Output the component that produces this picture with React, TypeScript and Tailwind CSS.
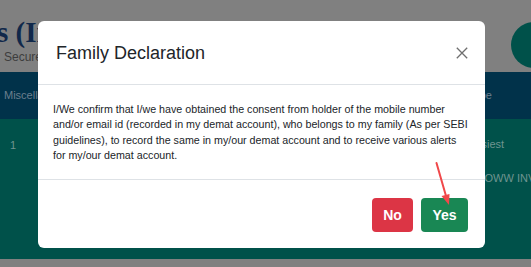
import React from "react";

export default function App() {
  return (
    <div className="relative w-[531px] h-[267px] overflow-hidden bg-[#808080] font-['Liberation_Sans',Arial,sans-serif]">
      {/* Background page (dimmed) */}
      <div className="flex flex-col h-full">
        <div className="h-[72px] flex justify-between items-start">
          <div className="flex flex-col ml-[-3px] pt-[18px] gap-[4px]">
            <span className="font-['Liberation_Serif',serif] font-bold text-[29px] leading-none text-[#10284a] whitespace-nowrap">s (In</span>
            <span className="ml-[7px] text-[12px] leading-none text-[#3d3d3d] whitespace-nowrap">Secured</span>
          </div>
          <div className="mt-[22px] mr-[-26px] w-[46px] h-[46px] rounded-full bg-[#00514a] shrink-0" />
        </div>
        <div className="h-[47px] bg-[#01324a] flex items-center justify-between pl-[4px] pr-[39px] text-[11px] text-[#6b7f8e]">
          <span>Miscellaneous</span>
          <span>Type</span>
        </div>
        <div className="h-[140px] bg-[#00514a] flex justify-between items-start pl-[10px] pt-[17px] text-[11px] text-[#6f9490]">
          <span className="mt-[1px]">1</span>
          <div className="w-[63px] flex flex-col gap-[17px] whitespace-nowrap">
            <span>Easiest</span>
            <span>GROWW INV</span>
          </div>
        </div>
      </div>

      {/* Modal */}
      <div className="absolute left-[38px] top-[21px] w-[447px] h-[227px] bg-white rounded-[6px] flex flex-col">
        <div className="h-[64px] flex items-center justify-between pl-[18px] pr-[17px] border-b border-[#dee2e6]">
          <h5 className="text-[18px] leading-none text-[#212529] mt-[1px]">Family Declaration</h5>
          <svg width="12" height="12" viewBox="0 0 12 12">
            <path d="M0.8 0.8 L11.2 11.2 M11.2 0.8 L0.8 11.2" stroke="#6f6f6f" strokeWidth="1.3" fill="none" />
          </svg>
        </div>
        <div className="h-[95px] px-[15px] pt-[17px] border-b border-[#dee2e6]">
          <p className="text-[10.7px] leading-[15.4px] text-[#212529]">
            I/We confirm that I/we have obtained the consent from holder of the mobile number and/or email id (recorded in my demat account), who belongs to my family (As per SEBI guidelines), to record the same in my/our demat account and to receive various alerts for my/our demat account.
          </p>
        </div>
        <div className="flex-1 flex justify-end items-start pt-[18px] pr-[17px] gap-[8px]">
          <button className="w-[41px] h-[34px] rounded-[4px] bg-[#dc3545] text-white text-[14px] font-bold">No</button>
          <button className="w-[47px] h-[34px] rounded-[4px] bg-[#198754] text-white text-[14px] font-bold">Yes</button>
        </div>
      </div>

      {/* Red annotation arrow */}
      <svg className="absolute left-0 top-0" width="531" height="267" viewBox="0 0 531 267">
        <line x1="436.5" y1="163" x2="446" y2="196" stroke="#f0484a" strokeWidth="2" strokeLinecap="round" />
        <polygon points="449,205 441.5,196 449.5,194" fill="#f0484a" />
      </svg>
    </div>
  );
}
